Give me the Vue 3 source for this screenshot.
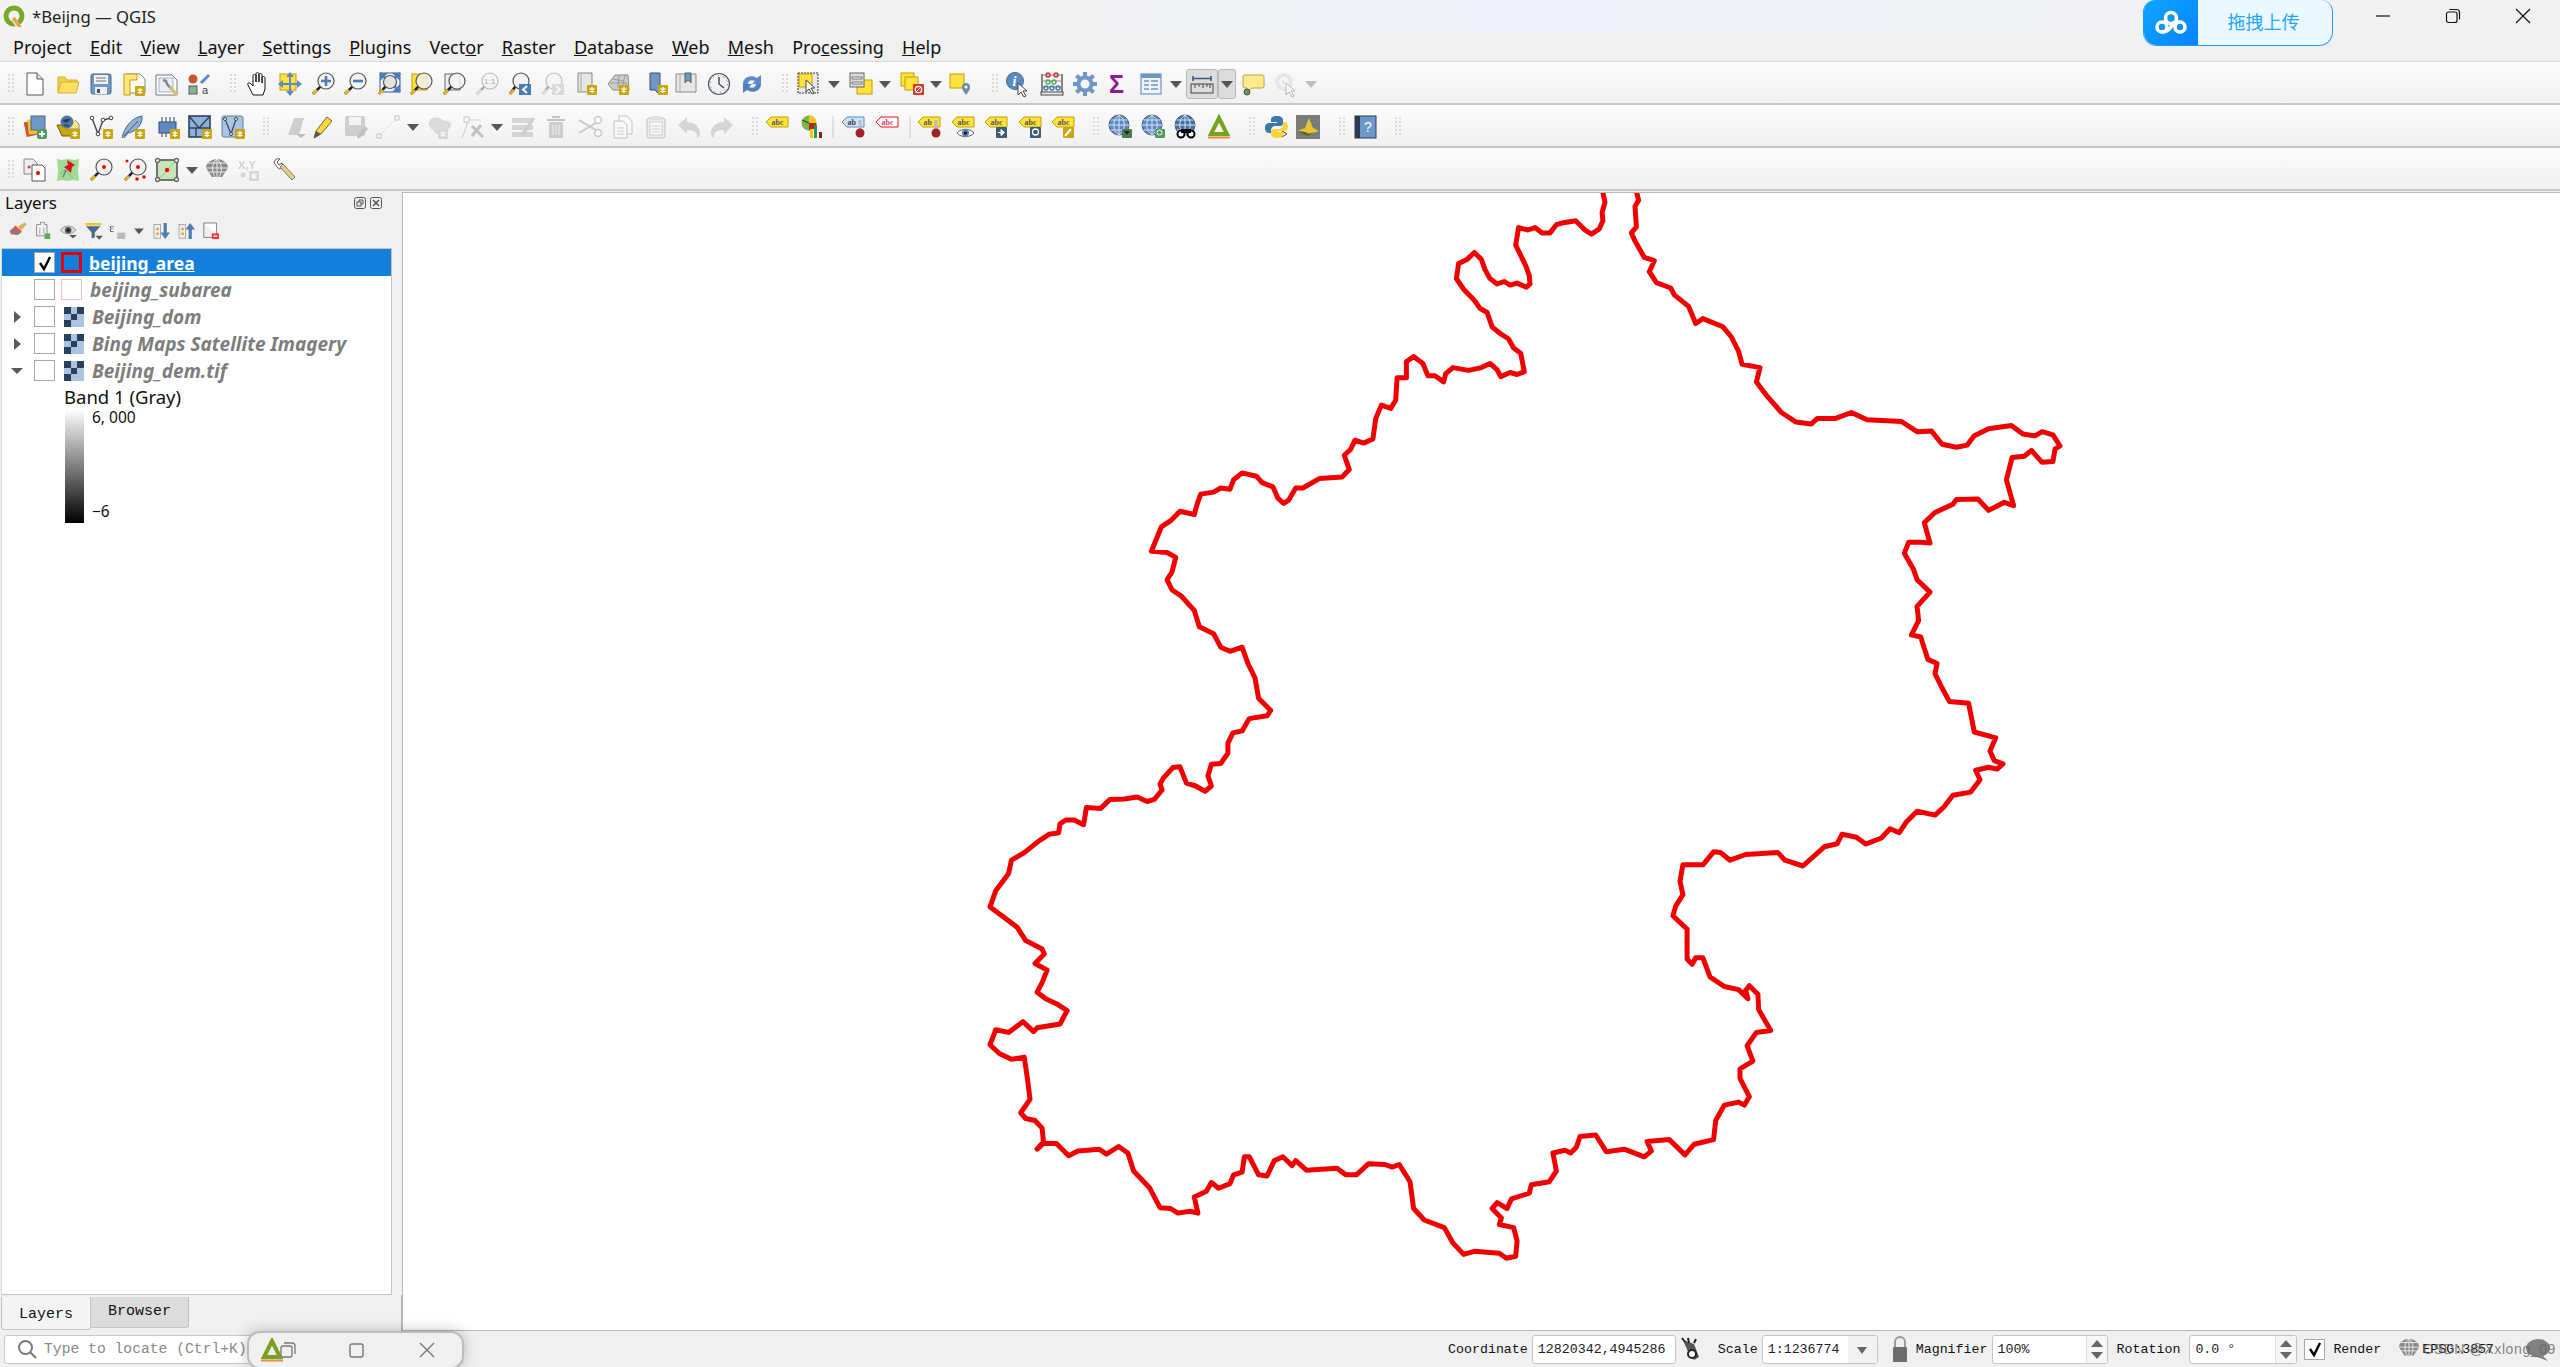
<script setup>
// small shared pieces for the toolbar icons
const star = (x = 13, y = 13) =>
  `<rect x="${x}" y="${y}" width="10" height="10" rx="1" fill="#c9a50e"/><path d="M${x + 5} ${y + 2}v6M${x + 2.5} ${y + 3.5}l5 3M${x + 7.5} ${y + 3.5}l-5 3" stroke="#fff" stroke-width="1.3"/>`
const mag = (cx = 15, cy = 9, r = 8, fill = '#f3f3f3') =>
  `<path d="M2 22L${cx - r * 0.7} ${cy + r * 0.7}" stroke="#222" stroke-width="2.6"/><path d="M2 22l4-4" stroke="#e3b422" stroke-width="3"/><circle cx="${cx}" cy="${cy}" r="${r}" fill="${fill}" stroke="#555" stroke-width="1.2"/>`
const cursor = (x = 10, y = 9) =>
  `<path d="M${x} ${y}v12l3-3 3 5 2-1-3-5h4z" fill="#fff" stroke="#444"/>`
const sheet = (d = 'M3 1h14v19H3z') =>
  `<path d="${d}" fill="#e6e6e6" stroke="#8a8a8a"/><path d="M6 1v19" stroke="#aaa"/>`
const tag = (fill = '#ffe23d', line = '#c4a000', t = 'abc', col = '#555') =>
  `<path d="M1 7l5-5h17v10H6z" fill="${fill}" stroke="${line}"/><text x="6.5" y="10" font-size="8" font-weight="700" font-family="Liberation Serif" fill="${col}">${t}</text>`
const pin = `<path d="M19 5v10" stroke="#bbb" stroke-width="3"/><circle cx="19" cy="18" r="4.5" fill="#a3222a"/>`
const globe = (c = '#5d8ac4') =>
  `<circle cx="11" cy="10" r="10" fill="${c}" stroke="#50627a"/><path d="M1 10h20M3 5h16M3 15h16M11 0v20M11 0c-7 5-7 15 0 20M11 0c7 5 7 15 0 20" stroke="#d8e4f2" fill="none"/>`
const tri = `<path d="M12 3L4 19h16z" fill="none" stroke="#77a31f" stroke-width="4"/><path d="M1 22.5h22" stroke="#ee8a3a" stroke-width="2"/>`

const icons = {
  new: `<path d="M4 1h10l6 6v16H4z" fill="#fff" stroke="#555"/><path d="M14 1v6h6" fill="#ddd" stroke="#555"/>`,
  open: `<path d="M2 20V5h7l2 3h10v3" fill="#f3cf4d" stroke="#d6b02e"/><path d="M2 21l3-11h18l-3 11z" fill="#ffdf63" stroke="#d6b02e"/>`,
  save: `<rect x="2" y="2" width="20" height="20" rx="2" fill="#6d97c4" stroke="#4a6a8c"/><rect x="5" y="3" width="14" height="9" fill="#f2f2f2"/><path d="M7 6h10M7 9h10" stroke="#777"/><rect x="6" y="15" width="12" height="7" fill="#eee"/><rect x="8" y="17" width="3" height="4" fill="#456"/>`,
  layoutNew: `<path d="M4 2h14l5 5v14H4z" fill="#fff" stroke="#888"/><path d="M2 2h13v6H8v15H2z" fill="#ffe680" stroke="#c5a100"/>${star(13, 14)}`,
  layoutMgr: `<path d="M1 3h16l5 5v15H1z" fill="#fff" stroke="#777"/><rect x="4" y="6" width="14" height="14" fill="#e9eef6" stroke="#9db3cf"/><path d="M8 8l3 1 1 3 9 10" stroke="#888" stroke-width="2.5" fill="none"/><path d="M15 15l7 8" stroke="#d9c06a" stroke-width="3"/>`,
  style: `<circle cx="6" cy="7" r="4.5" fill="#c8572e"/><path d="M14 11l8-8" stroke="#5d8ac4" stroke-width="3"/><rect x="2" y="14" width="8" height="8" fill="#8ab584" stroke="#557"/><text x="15" y="22" font-size="11" font-family="Liberation Sans" fill="#444">a</text>`,
  pan: `<path d="M7 23L2 13c-1-2 1-3 3-1l2 2V4c0-2 3-2 3 0v6V2c0-2 3-2 3 0v8V3c0-2 3-2 3 0v8V6c0-2 3-2 3 0v11l-2 6z" fill="#fff" stroke="#111"/>`,
  panTo: `<rect x="2" y="2" width="16" height="16" fill="#ffe23d" stroke="#c4a000"/><path d="M12 0l4 5h-8zM12 24l4-5H8zM0 12l5-4v8zM24 12l-5-4v8z" fill="#5d8ac4"/><path d="M12 4v16M4 12h16" stroke="#5d8ac4" stroke-width="2"/>`,
  zoomIn: `${mag()}<path d="M15 4v10M10 9h10" stroke="#4c7bb5" stroke-width="2.6"/>`,
  zoomOut: `${mag()}<path d="M10 9h10" stroke="#4c7bb5" stroke-width="2.6"/>`,
  zoomFull: `<rect x="3" y="1" width="20" height="19" fill="#f2f2f2" stroke="#4c7bb5" stroke-width="1.2"/><path d="M3 1l6 6M23 1l-6 6M23 20l-6-6" stroke="#5d8ac4" stroke-width="2.6"/>${mag(13, 10, 6.5, '#e4e4e4')}<path d="M3 1h8l-8 8zM23 1h-8l8 8zM23 20h-8l8-8z" fill="#4c7bb5"/>`,
  zoomSel: `<rect x="3" y="2" width="15" height="16" fill="#ffe23d" stroke="#c4a000"/>${mag(15, 9, 8, 'rgba(240,240,240,.85)')}`,
  zoomLayer: `<rect x="3" y="2" width="15" height="16" fill="#eee" stroke="#666"/>${mag(15, 9, 8, 'rgba(245,245,245,.8)')}`,
  zoomNative: `${mag()}<text x="9" y="12" font-size="8" font-weight="700" font-family="Liberation Sans" fill="#555">1:1</text>`,
  zoomLast: `${mag(13, 9, 8)}<rect x="11" y="12" width="12" height="11" fill="#4c7bb5"/><path d="M19 14l-4 3.5 4 3.5" stroke="#fff" stroke-width="2" fill="none"/>`,
  zoomNext: `${mag(13, 9, 8)}<rect x="11" y="12" width="12" height="11" fill="#aaa"/><path d="M15 14l4 3.5-4 3.5" stroke="#fff" stroke-width="2" fill="none"/>`,
  mapDoc: `${sheet()}${star(12, 13)}`,
  map3d: `<path d="M1 12L8 3h13l1 15H6z" fill="#ccc" stroke="#8a8a8a"/><path d="M6 7l10 2 5 5M12 3l-1 13M18 3l-3 14M3 11h17" stroke="#999" fill="none"/>${star(12, 13)}`,
  bookmark: `<path d="M5 1h10v22l-5-5H5z" fill="#6d97c4" stroke="#3c4f66"/>${star(13, 13)}`,
  bookmarks: `${sheet('M2 2h20v18H2z')}<path d="M11 1h6v10l-3-3-3 3z" fill="#6d97c4" stroke="#466"/>`,
  clock: `<circle cx="12" cy="12" r="10.5" fill="#eef2f6" stroke="#555" stroke-width="1.2"/><circle cx="12" cy="12" r="8.5" fill="none" stroke="#6d97c4" stroke-dasharray="1.5 4"/><path d="M12 5v7l5 4" stroke="#444" stroke-width="1.4" fill="none"/>`,
  refresh: `<path d="M3 12c0-7 8-10 14-6l4-3v9h-9l3-3c-4-2-7 0-7 3z" fill="#5d8ac4"/><path d="M21 12c0 7-8 10-14 6l-4 3v-9h9l-3 3c4 2 7 0 7-3z" fill="#4d82bd"/>`,
  select: `<rect x="1" y="1" width="20" height="20" fill="#e8e8e8" stroke="#333" stroke-dasharray="2 1"/><rect x="2" y="2" width="13" height="13" fill="#ffe23d" stroke="#c4a000"/>${cursor(9, 8)}`,
  selAttr: `<rect x="8" y="8" width="15" height="14" fill="#ffe23d" stroke="#c4a000"/><rect x="1" y="1" width="14" height="14" fill="#ddd" stroke="#666"/><path d="M3 5h10v2H3zM3 10h10v2H3z" fill="#fff" stroke="#777"/>`,
  deselect: `<rect x="1" y="1" width="13" height="13" fill="#ffe23d" stroke="#c4a000"/><rect x="5" y="5" width="13" height="13" fill="#ffe23d" stroke="#c4a000"/><rect x="13" y="12" width="11" height="11" rx="1" fill="#d9342b"/><circle cx="18.5" cy="17.5" r="3.2" fill="none" stroke="#fff" stroke-width="1.3"/><path d="M16 20l5-5" stroke="#fff"/>`,
  selLoc: `<rect x="2" y="2" width="14" height="14" fill="#ffe23d" stroke="#c4a000"/><path d="M18 23c-3-4-4-6-4-8a4 4 0 018 0c0 2-1 4-4 8z" fill="#6d8aa6"/><circle cx="18" cy="15" r="1.5" fill="#fff"/>`,
  identify: `<circle cx="9" cy="9" r="8.5" fill="#5d8ac4" stroke="#4a6a8c"/><text x="6.5" y="14" font-size="14" font-weight="700" font-style="italic" font-family="Liberation Serif" fill="#fff">i</text>${cursor(12, 11)}`,
  abacus: `<path d="M2 2v18M22 2v18" stroke="#555" stroke-width="1.4"/><path d="M2 3h20M2 9h20M2 15h20" stroke="#888"/><rect x="1" y="20" width="22" height="3" fill="#eee" stroke="#444"/><g fill="none" stroke-width="1.4"><circle cx="8" cy="3" r="2" stroke="#c33"/><circle cx="16" cy="3" r="2" stroke="#c33"/><circle cx="8" cy="10" r="2" stroke="#5a5"/><circle cx="14" cy="10" r="2" stroke="#5a5"/><circle cx="6" cy="16" r="2" stroke="#47a"/><circle cx="12" cy="16" r="2" stroke="#47a"/><circle cx="18" cy="16" r="2" stroke="#47a"/></g>`,
  gear: `<circle cx="12" cy="12" r="6.5" fill="none" stroke="#6d97c4" stroke-width="4"/><path d="M12 0v5M12 19v5M0 12h5M19 12h5M3.5 3.5l4 4M16.5 16.5l4 4M20.500 3.500l-4 4M7.500 16.500l-4 4" stroke="#6d97c4" stroke-width="4"/>`,
  sigma: `<text x="3" y="21" font-size="25" font-weight="700" font-family="Liberation Sans" fill="#8b1a93">Σ</text>`,
  attrTable: `<rect x="2" y="2" width="20" height="20" fill="#eef3fa" stroke="#6d97c4" stroke-width="1.2"/><rect x="2" y="2" width="20" height="4" fill="#6d97c4"/><path d="M5 9h5M12 9h7M5 13h5M12 13h7M5 17h5M12 17h7" stroke="#6d97c4" stroke-width="1.6"/>`,
  measure: `<path d="M3 4v5M21 4v5M3 6.500h18" stroke="#3c5878" stroke-width="1.6"/><rect x="1" y="12" width="22" height="9" fill="#ddd" stroke="#444"/><path d="M5 12v4M9 12v3M13 12v4M17 12v3M20 12v4" stroke="#444"/>`,
  tip: `<path d="M4 3h17q2 0 2 2v9q0 2-2 2H11l-5 3v-3H4q-2 0-2-2V5q0-2 2-2z" fill="#ffe98a" stroke="#b9a44a"/><circle cx="6" cy="20" r="3" fill="#6a9a5a" stroke="#444"/>`,
  action: `<circle cx="11" cy="10" r="7" fill="none" stroke="#ccc" stroke-width="4"/><path d="M9 7l5 3-5 3z" fill="#ccc"/>${cursor(13, 11)}`,
  dsm: `<rect x="2" y="6" width="13" height="15" fill="#c8572e" transform="rotate(-12 8 13)"/><rect x="5" y="4" width="13" height="15" fill="#f4c430" transform="rotate(-6 11 11)"/><rect x="8" y="1" width="14" height="14" fill="#6d97c4" stroke="#4a6a8c"/><rect x="14" y="14" width="10" height="10" rx="2" fill="#4f9a5a"/><path d="M19 16v6M16 19h6" stroke="#fff" stroke-width="1.8"/>`,
  gpkg: `<path d="M1 10l5 11h13V10z" fill="#c9a50e" stroke="#6b5a00"/><path d="M12 14h11V9l-4-4" fill="#ffe680" stroke="#888"/><circle cx="11" cy="7" r="6.500" fill="#4f78a8"/><path d="M7 5l3 2 4-3M8 10l5 1" stroke="#2e4a6b" stroke-width="2"/>${star(14, 14)}`,
  vec: `<path d="M3 3l6 16 5-14 8-2" fill="none" stroke="#444" stroke-width="1.4"/><g fill="#fff" stroke="#444"><circle cx="3" cy="3" r="1.8"/><circle cx="9" cy="19" r="1.8"/><circle cx="14" cy="5" r="1.8"/><circle cx="22" cy="3" r="1.8"/></g>${star(14, 14)}`,
  feather: `<path d="M1 23C3 13 10 3 21 1c1 8-6 16-14 17l-4 5" fill="#8fb0d6" stroke="#4a6a8c"/><path d="M3 21L17 6" stroke="#456"/>${star(14, 14)}`,
  chip: `<rect x="3" y="7" width="17" height="11" fill="#5d8ac4" stroke="#2f4e70"/><path d="M6 2v5M10 2v5M14 2v5M18 2v5M6 18v4M10 18v4" stroke="#345"/>${star(14, 14)}`,
  mesh: `<rect x="1" y="1" width="21" height="21" fill="#8fb0d6" stroke="#2b4361" stroke-width="1.6"/><path d="M1 13h21M8 13v9M1 1l10 12 11-12M11 13L22 1" stroke="#2b4361" stroke-width="1.4" fill="none"/>${star(14, 14)}`,
  vecBox: `<rect x="1" y="1" width="21" height="21" rx="2" fill="#a9c3e2" stroke="#5d7ea6"/><path d="M4 4l6 15 5-15" fill="none" stroke="#345" stroke-width="1.2"/><g fill="#fff" stroke="#345"><circle cx="4" cy="4" r="1.500"/><circle cx="10" cy="19" r="1.500"/><circle cx="15" cy="4" r="1.500"/></g>${star(14, 14)}`,
  multi: `<path d="M4 20L10 3h5l-5 17zM9 20l6-17h5l-5 17z" fill="#888"/><path d="M12 19h10l-5 4z" fill="#555"/>`,
  pencil: `<path d="M3 23l2-7L16 2l5 4-11 13z" fill="#f6d743" stroke="#7a6a1a"/><path d="M3 23l2-7 5 3z" fill="#555"/>`,
  saveEdit: `<rect x="1" y="1" width="20" height="20" rx="2" fill="#888"/><rect x="5" y="2" width="12" height="8" fill="#eee"/><path d="M13 20l8-9 3 3-8 9h-3z" fill="#666"/>`,
  dig: `<path d="M3 21L21 3" stroke="#777" stroke-dasharray="2 2"/><rect x="1" y="19" width="4" height="4" fill="#fff" stroke="#666"/><rect x="19" y="1" width="4" height="4" fill="#fff" stroke="#666"/>`,
  poly: `<path d="M1 6c2-5 11-4 14-1 3 1 8 0 8 5 0 5-5 4-7 6l-1 3H8c-2-4-9-6-7-13z" fill="#aaa"/>${star(10, 14)}`,
  vertex: `<path d="M6 4v6L1 23" stroke="#777" fill="none"/><rect x="3" y="2" width="5" height="5" fill="#fff" stroke="#666"/><path d="M8 5h12" stroke="#888"/><path d="M11 11l11 11M20 10L11 21" stroke="#666" stroke-width="3"/>`,
  editTable: `<rect x="1" y="3" width="21" height="5" fill="#9a9a7a"/><rect x="1" y="10" width="21" height="5" fill="#9a9a7a"/><rect x="1" y="17" width="21" height="5" fill="#9a9a7a"/><path d="M10 19l11-17 3 2-11 17z" fill="#888"/>`,
  trash: `<path d="M3 5h18M8 2h8" stroke="#855" stroke-width="2"/><path d="M5 7h14v16H5z" fill="#a78"/><path d="M9 10v10M12 10v10M15 10v10" stroke="#eee"/>`,
  scissors: `<path d="M1 5l22 13M1 18L23 5" stroke="#777" stroke-width="2"/><circle cx="20" cy="5" r="3.500" fill="#fff" stroke="#777" stroke-width="1.500"/><circle cx="20" cy="18" r="3.500" fill="#fff" stroke="#777" stroke-width="1.500"/>`,
  copy: `<path d="M8 1h8l5 5v13H8z" fill="#fff" stroke="#666"/><path d="M3 6h9l4 4v13H3z" fill="#fff" stroke="#666"/><path d="M6 13h7M6 16h7M6 19h7" stroke="#888"/>`,
  paste: `<rect x="3" y="3" width="18" height="20" rx="2" fill="#ddd" stroke="#666"/><rect x="8" y="1" width="8" height="4" fill="#bbb"/><rect x="6" y="7" width="12" height="13" fill="#fff" stroke="#888"/><path d="M8 11h8M8 14h8M8 17h8" stroke="#888"/>`,
  undo: `<path d="M1 10l9-8v5c8 0 13 5 13 11 0 2-1 4-3 5 1-6-3-8-10-8v4z" fill="#999"/>`,
  redo: `<path d="M23 10l-9-8v5C6 7 1 12 1 18c0 2 1 4 3 5-1-6 3-8 10-8v4z" fill="#999"/>`,
  label: tag(),
  diagram: `<circle cx="9" cy="8" r="7.500" fill="#7ab648"/><path d="M9 8V.500A7.500 7.500 0 0116.500 8z" fill="#f5c518"/><path d="M9 8h7.500A7.500 7.500 0 019 15.500z" fill="#b3251e"/><path d="M2 5l7 3" stroke="#333"/><rect x="10" y="14" width="3" height="9" fill="#f5c518"/><rect x="14" y="10" width="3" height="13" fill="#1f9a4a"/><rect x="19" y="17" width="3" height="6" fill="#8b1a1a"/>`,
  abBlue: `${tag('#cfe2f7', '#5d8ac4', 'ab', '#345')}${pin}`,
  abcRed: tag('#fff', '#e3141c', 'abc', '#e36'),
  abPin: `${tag('#ffe23d', '#c4a000', 'ab')}${pin}`,
  abcEye: `${tag()}<path d="M6 18c5-5 12-5 17 0-5 5-12 5-17 0z" fill="#fff" stroke="#666"/><circle cx="14.500" cy="18" r="3.500" fill="#4c7bb5"/><circle cx="14.500" cy="18" r="1.500" fill="#111"/>`,
  abcMove: `${tag()}<rect x="12" y="12" width="11" height="11" rx="1" fill="#3d5c78"/><path d="M14 17.500h4M17 14.500l3.500 3-3.500 3z" fill="#fff" stroke="#fff"/>`,
  abcRot: `${tag()}<rect x="12" y="12" width="11" height="11" rx="1" fill="#3d5c78"/><circle cx="17.500" cy="17" r="3" fill="none" stroke="#fff" stroke-width="1.300"/>`,
  abcEdit: `${tag()}<rect x="12" y="12" width="11" height="11" rx="1" fill="#c9a50e"/><path d="M14 21l6-7" stroke="#fff" stroke-width="2"/>`,
  globeA: `${globe()}<rect x="14" y="14" width="10" height="9" rx="1" fill="#4f7a4f"/><path d="M16 16h6l-3 4z" fill="#222"/>`,
  globeB: `${globe()}<rect x="14" y="14" width="10" height="9" rx="1" fill="#4f9a5a"/><circle cx="18.500" cy="17.500" r="2.500" fill="none" stroke="#fff"/>`,
  globeC: `${globe('#47709f')}<circle cx="7" cy="19" r="3.500" fill="#fff" stroke="#000" stroke-width="2"/><circle cx="17" cy="19" r="3.500" fill="#fff" stroke="#000" stroke-width="2"/><path d="M7 14h10v4H7z"/>`,
  tri,
  python: `<path d="M12 1c-5 0-6 2-6 4v2h6v1H4c-3 0-4 3-4 5s1 5 4 5h2v-3c0-2 2-4 4-4h5c2 0 3-1 3-3V5c0-2-2-4-6-4z" fill="#3c78a8"/><path d="M13 23c5 0 6-2 6-4v-2h-6v-1h6c2 0 4-1 4-4s-1-5-4-5h-1v3c0 2-2 4-4 4H9c-2 0-3 1-3 3v2c0 2 2 4 7 4z" fill="#fdd43c"/><path d="M17 16l5 3-5 3" stroke="#555" fill="none"/>`,
  grass: `<rect width="24" height="24" fill="#7a7a78"/><path d="M1 16l8-3 4-10 4 10 6 3-9 3-5-2z" fill="#e8c430"/><path d="M1 16l8 1 3 2 6-2-6 4z" fill="#4e6a22"/>`,
  help: `<rect x="1" y="1" width="21" height="22" fill="#6d97c4" stroke="#2b3a4d"/><rect x="1" y="1" width="5" height="22" fill="#2b3a4d"/><text x="10" y="17" font-size="14" font-family="Liberation Sans" fill="#fff">?</text>`,
  identDoc: `<path d="M1 1h9l4 4v11H1z" fill="#eee" stroke="#888"/><path d="M9 7h10l3 3v13H9z" fill="#fff" stroke="#555"/><circle cx="6" cy="9" r="1.500" fill="#e33"/><circle cx="15" cy="15" r="2" fill="#e00"/>`,
  mapPin: `<path d="M1 1l5 1 6-1 6 1 5-1-1 11 1 11-6-1-6 1-5-1-5 1 1-11z" fill="#9fdc93"/><path d="M4 16l5-4 8 8M14 2l3 7" stroke="#6fc0a8" fill="none"/><path d="M11 2l8 5-3 2-1 6-7-6 4-2z" fill="#e0121f"/><path d="M10 12l-3 7" stroke="#777" stroke-width="1.500"/>`,
  magDot: `${mag()}<circle cx="15" cy="9" r="2" fill="#f00"/>`,
  magDots: `${mag()}<circle cx="15" cy="9" r="2" fill="#f00"/><circle cx="4" cy="3" r="1.500" fill="#e00"/><circle cx="14" cy="21" r="1.800" fill="#e00"/><circle cx="21" cy="19" r="1.800" fill="#e00"/>`,
  boxPick: `<rect x="2" y="2" width="20" height="20" fill="#c7e6b8" stroke="#555" stroke-width="1.600"/><path d="M4 20l7-6 8-10" stroke="#8ccf7a" fill="none"/><g fill="#fff" stroke="#666" stroke-width="1.300"><circle cx="2.500" cy="2.500" r="2"/><circle cx="21.500" cy="2.500" r="2"/><circle cx="2.500" cy="21.500" r="2"/><circle cx="21.500" cy="21.500" r="2"/></g><circle cx="12" cy="12" r="2.200" fill="#f00"/>`,
  globeGray: `<path d="M12 1a11 9 0 0111 9l-6 9H7l-6-9A11 9 0 0112 1z" fill="#888"/><path d="M1 10h22M3 5h18M4 14h16M12 1v18M12 1c-6 4-5 14-2 18M12 1c6 4 5 14 2 18" stroke="#eee" fill="none"/>`,
  xy: `<text x="0" y="11" font-size="11" font-weight="700" font-family="Liberation Sans" fill="#888">X,Y</text><circle cx="5" cy="17" r="2.500" fill="#999"/>${star(11, 13)}`,
  wrench: `<path d="M2 5c0-3 3-5 6-4l-3 3 2 3 3-2c1 3-1 6-3 6z" fill="#fff" stroke="#555"/><path d="M8 9l3-3 12 13-3 3z" fill="#e3cf7e" stroke="#777"/>`,
  brush: `<path d="M12 6l9-5 2 3-8 8z" fill="#d9b45a"/><path d="M2 12l7-7 8 8-5 4-9-1z" fill="#e5563a"/><path d="M2 12l12 2" stroke="#5d8ac4" stroke-width="3"/>`,
  addGroup: `<path d="M9 1h5v3h3v14H4V4h5z" fill="#f2f2f2" stroke="#777"/><path d="M8 8v8M13 8v8" stroke="#999"/><rect x="14" y="15" width="7" height="7" fill="#5aa85a"/>`,
  eye: `<path d="M1 11c6-7 14-7 20 0-6 6-14 6-20 0z" fill="#d8d8d8" stroke="#888"/><circle cx="11" cy="11" r="4" fill="#555"/><circle cx="11" cy="11" r="2" fill="#222"/><path d="M12 17h10l-5 4z" fill="#555"/>`,
  filter: `<path d="M1 2h20v3H1z" fill="#f0c419"/><path d="M2 6h18l-7 8v6l-4 1v-7z" fill="#456a8c"/><path d="M14 18h9l-4.500 5z" fill="#555"/>`,
  eps: `<text x="1" y="13" font-size="15" font-family="Liberation Serif" fill="#6b3b7a">ε</text><rect x="11" y="14" width="10" height="8" fill="#bbb"/>`,
  expand: `<rect x="2" y="4" width="8" height="17" fill="#eee" stroke="#999"/><rect x="5" y="8" width="3" height="3" fill="#e8a020"/><rect x="5" y="14" width="3" height="3" fill="#e8a020"/><path d="M16 2v13" stroke="#4c7bb5" stroke-width="4"/><path d="M10 14h12l-6 8z" fill="#4c7bb5"/>`,
  collapse: `<rect x="2" y="4" width="8" height="17" fill="#eee" stroke="#999"/><rect x="5" y="8" width="3" height="3" fill="#e8a020"/><rect x="5" y="14" width="3" height="3" fill="#e8a020"/><path d="M16 8v14" stroke="#4c7bb5" stroke-width="4"/><path d="M10 10h12l-6-8z" fill="#4c7bb5"/>`,
  removeLayer: `<path d="M3 2h16v15" fill="#fff" stroke="#666"/><path d="M3 2v18h10" fill="none" stroke="#666"/><rect x="13" y="15" width="9" height="7" fill="#e33"/><path d="M15 18.500h5" stroke="#fff" stroke-width="1.600"/>`,
  dd: `<path d="M6 9h12l-6 7z" fill="#555"/>`,
  grip: `<g fill="#bbb"><circle cx="10" cy="3" r=".8"/><circle cx="14" cy="3" r=".8"/><circle cx="10" cy="7" r=".8"/><circle cx="14" cy="7" r=".8"/><circle cx="10" cy="11" r=".8"/><circle cx="14" cy="11" r=".8"/><circle cx="10" cy="15" r=".8"/><circle cx="14" cy="15" r=".8"/><circle cx="10" cy="19" r=".8"/><circle cx="14" cy="19" r=".8"/></g>`,
  sep: `<path d="M12 1v22" stroke="#ccc"/>`,
}

// "name:centerX", ! means greyed out, + means pressed
function parseRow(str) {
  let right = 0
  return str.trim().split(/\s+/).map((entry) => {
    const [raw, c] = entry.split(':')
    const name = raw.replace(/[!+]/g, '')
    const on = raw.includes('+')
    const w = on ? (name === 'dd' ? 18 : 32) : 24
    const ml = Number(c) - w / 2 - right
    right = Number(c) + w / 2
    return { name, off: raw.includes('!'), on, w, ml }
  })
}

const rows = [
  parseRow(`grip:11 new:35 open:68 save:101 layoutNew:134 layoutMgr:167 style:199 grip:233 pan:258 panTo:290 zoomIn:323 zoomOut:355
    zoomFull:389 zoomSel:421 zoomLayer:454 zoomNative!:487 zoomLast:520 zoomNext!:553 mapDoc:587 map3d:619 bookmark:657 bookmarks:686
    clock:719 refresh:752 grip:785 select:809 dd:834 selAttr:861 dd:885 deselect:912 dd:936 selLoc:960 grip:995 identify:1018
    abacus:1052 gear:1085 sigma:1118 attrTable:1151 dd:1176 measure+:1202 dd+:1227 tip:1253 action!:1285 dd!:1311`),
  parseRow(`grip:11 dsm:35 gpkg:68 vec:101 feather:133 chip:168 mesh:200 vecBox:233 grip:266 multi!:296 pencil:323 saveEdit!:356 dig!:388
    dd:413 poly!:440 vertex!:473 dd:497 editTable!:523 trash!:556 scissors!:590 copy!:623 paste!:656 undo!:689 redo!:722 grip:755
    label:777 diagram:812 sep:833 abBlue:853 abcRed:887 sep:910 abPin:929 abcEye:963 abcMove:996 abcRot:1030 abcEdit:1063 grip:1096
    globeA:1120 globeB:1153 globeC:1186 tri:1219 grip:1252 python:1277 grass:1308 grip:1342 help:1366 grip:1398`),
  parseRow(`grip:11 identDoc:35 mapPin:68 magDot:101 magDots:135 boxPick:167 dd:192 globeGray:217 xy!:250 wrench:284`),
]
const layerTools = parseRow(`brush:18 addGroup:43 eye:69 filter:94 eps:118 dd:139 expand:162 collapse:187 removeLayer:211`)

const menus = [
  ['Pro', 'j', 'ect'], ['', 'E', 'dit'], ['', 'V', 'iew'], ['', 'L', 'ayer'], ['', 'S', 'ettings'], ['', 'P', 'lugins'],
  ['Vect', 'o', 'r'], ['', 'R', 'aster'], ['', 'D', 'atabase'], ['', 'W', 'eb'], ['', 'M', 'esh'], ['Pro', 'c', 'essing'], ['', 'H', 'elp'],
]

const layers = [
  { name: 'beijing_area', sym: 'line', on: true, cls: 'sel' },
  { name: 'beijing_subarea', sym: 'faint', cls: 'dim' },
  { name: 'Beijing_dom', sym: 'raster', caret: 'r', cls: 'dim' },
  { name: 'Bing Maps Satellite Imagery', sym: 'raster', caret: 'r', cls: 'dim' },
  { name: 'Beijing_dem.tif', sym: 'raster', caret: 'd', cls: 'dim' },
]

// outline traced from the map, [x, y] in page pixels
const upper = (x, y) => [960 + x / 1.4, 190 + y / 2.45]
const lower = (x, y) => [960 + x / 1.4, 690 + y / 2.613]
const pairs = (nums, fn) => {
  const out = []
  for (let i = 0; i < nums.length; i += 2) out.push(fn(nums[i], nums[i + 1]))
  return out
}
const partA = [899,2,903,35,899,60,900,80,895,100,884,113,875,103,862,80,845,85,835,90,826,110,815,110,805,97,795,103,782,97,778,140,785,165,792,190,797,215,798,235,793,243,780,233,770,238,762,229,752,235,742,222,735,200,730,175,720,158,710,175,698,185,695,222,705,248,720,275,728,295,738,305,745,340,755,355,768,370,775,392,785,405,790,450,780,457,770,452,757,462,752,445,742,430,730,440,712,447,690,440,680,455,677,475,665,460,655,460,648,430,635,413,625,425,625,465,612,465,610,520,603,540,590,532,582,565,578,615,565,625,553,618,547,640,538,655,545,690,535,708,503,712,480,735,470,735,460,765,453,773,445,760,438,732,423,722,415,706,395,698,383,715,378,738,365,735,355,745,337,750,332,775,328,800,308,792,295,815,282,830,275,860,268,890,290,893,302,905,297,940,290,960,297,985,310,1000,328,1035,335,1075,355,1092,365,1125,378,1135,395,1125,403,1165,413,1200,418,1250,435,1280,430,1293,405,1300,395,1330,382,1335,375,1360,375,1385,365,1410,352,1412,347,1440,352,1465,343,1478,330,1465,317,1458,308,1418,298,1420,285,1445,280,1460,283,1475,272,1498,262,1503,248,1492,230,1497,210,1498,197,1520,177,1518,173,1560]
const partB = [160,345,148,345,140,355,138,378,125,382,110,400,90,430,72,450,68,485,50,530,42,572,60,597,80,625,92,660,115,682,118,695,105,720,122,737,115,770,108,795,120,812,135,825,150,843,140,878,108,888,103,898,88,872,68,900,50,893,42,932,55,955,72,970,90,965,95,1030,98,1075,85,1110,92,1125,105,1130,115,1150,117,1190,108,1205,115,1190,135,1190,152,1222,165,1210,195,1205,205,1218,222,1198,235,1215,243,1262,265,1305,280,1358,295,1360,305,1372,322,1367,333,1372,328,1330,345,1315,352,1292,362,1307,378,1295,383,1272,395,1265,398,1225,405,1225,418,1272,430,1275,440,1235,452,1225,465,1248,470,1235,485,1260,528,1255,540,1272,555,1272,572,1243,595,1245,605,1252,615,1245,630,1290,635,1360,650,1390,678,1410,690,1450,705,1480,720,1472,755,1477,765,1490,778,1485,780,1445,775,1410,755,1402,758,1385,745,1360,752,1345,766,1360,772,1335,797,1320,800,1298,825,1290,835,1262,830,1215,847,1208,855,1215,863,1200,868,1172,890,1168,905,1212,930,1205,958,1225,968,1210,962,1185,993,1180,1015,1220,1028,1192,1055,1180,1058,1130,1070,1090,1090,1082,1098,1090,1105,1068,1092,1020,1092,995,1110,975,1102,935,1115,900,1135,895,1118,840,1117,800,1105,778,1100,790,1103,812,1090,788,1070,780,1050,755,1040,705,1030,705,1025,722,1018,708,1018,630,998,595,1002,570,1012,540,1008,505,1012,462,1040,462,1055,428,1065,430,1078,450,1100,435,1145,430,1155,450,1180,465,1210,415,1228,407,1235,382,1255,390,1268,408,1290,392,1302,368,1315,378,1325,350,1340,322,1365,332,1378,310,1390,280,1415,272,1428,240,1422,215,1440,207,1452,212,1460,198,1448,190,1442,165,1450,130,1420,115,1412,40,1385,35,1375,0]
const partC = [1365,1190,1368,1165,1355,1155,1345,1100,1332,1095,1342,1060,1340,1025,1358,990,1340,960,1335,935,1322,895,1328,868,1345,868,1358,870,1350,820,1365,795,1390,775,1395,763,1425,762,1440,790,1462,770,1475,778,1465,715,1473,660,1490,657,1500,643,1515,672,1530,670,1533,640,1540,632,1530,605,1515,597,1505,607,1488,603,1472,582,1440,590,1420,607,1410,630,1395,635,1375,628,1360,595,1340,597,1318,572,1270,568,1248,550,1225,565,1200,565,1192,578,1170,573,1150,550,1130,510,1115,475,1120,440,1095,432,1090,400,1080,365,1068,340,1040,320,1030,332,1020,290,1000,262,995,245,975,232,965,205,972,178,958,170,945,130,940,110,947,95,945,45,950,30,946,2]
const outline = [...pairs(partA, upper), ...pairs(partB, lower), ...pairs(partC, upper)]
  .map((p) => p.map((v) => v.toFixed(1)).join(','))
  .join(' ')
</script>

<template>
  <div class="app">
    <header class="titlebar">
      <svg class="qgis" width="24" height="24" viewBox="0 0 24 24">
        <circle cx="12" cy="11" r="8" fill="none" stroke="#7aa82b" stroke-width="5" />
        <path d="M12 11l8 11h-6l-6-9z" fill="#f0f0f0" />
        <path d="M13 12l7 10h-4l-6-8z" fill="#e8a23c" />
      </svg>
      <span class="win-title">*Beijng — QGIS</span>
      <div class="upload">
        <div class="upload-logo">
          <svg width="32" height="26" viewBox="0 0 32 26" fill="none" stroke="#fff" stroke-width="3.600">
            <circle cx="16" cy="8" r="5.500" />
            <circle cx="7" cy="17" r="5" />
            <circle cx="25" cy="17" r="5" />
            <path d="M7 22c6 0 8-4 9-5s3-5 9-5" />
          </svg>
        </div>
        <span class="upload-text">拖拽上传</span>
      </div>
      <div class="win-btns">
        <svg width="16" height="16" viewBox="0 0 16 16"><path d="M1 8h14" stroke="#111" stroke-width="1.200" /></svg>
        <svg width="16" height="16" viewBox="0 0 16 16" fill="none" stroke="#111" stroke-width="1.200">
          <rect x="1.500" y="4" width="10.500" height="10.500" rx="2" />
          <path d="M4.500 1.500h7q3 0 3 3v7" />
        </svg>
        <svg width="16" height="16" viewBox="0 0 16 16"><path d="M1 1l14 14M15 1L1 15" stroke="#111" stroke-width="1.200" /></svg>
      </div>
    </header>

    <nav class="menubar">
      <span v-for="m in menus" :key="m[1] + m[2]" class="menu">{{ m[0] }}<u>{{ m[1] }}</u>{{ m[2] }}</span>
    </nav>

    <div v-for="(row, r) in rows" :key="r" class="toolbar">
      <span
        v-for="(t, i) in row"
        :key="i"
        class="tool"
        :class="{ off: t.off, on: t.on }"
        :style="{ width: t.w + 'px', marginLeft: t.ml + 'px' }"
      >
        <svg width="24" height="24" viewBox="0 0 24 24" v-html="icons[t.name]"></svg>
      </span>
    </div>

    <main class="main">
      <aside class="dock">
        <div class="dock-title">
          <span>Layers</span>
          <span class="dock-btns">
            <svg width="12" height="12" viewBox="0 0 12 12" fill="none" stroke="#555"><rect x=".5" y=".5" width="11" height="11" rx="2" /><rect x="3" y="5" width="4" height="4" /><path d="M5 5V3h4v4H7" /></svg>
            <svg width="12" height="12" viewBox="0 0 12 12" fill="none" stroke="#555"><rect x=".5" y=".5" width="11" height="11" rx="2" /><path d="M3 3l6 6M9 3L3 9" stroke-width="1.600" /></svg>
          </span>
        </div>
        <div class="dock-tools">
          <span
            v-for="(t, i) in layerTools"
            :key="i"
            class="dock-tool"
            :style="{ marginLeft: t.ml + 'px' }"
          >
            <svg width="24" height="24" viewBox="0 0 24 24" v-html="icons[t.name]"></svg>
          </span>
        </div>

        <div class="tree">
          <div v-for="l in layers" :key="l.name" class="layer" :class="l.cls">
            <span class="caret" :class="l.caret"></span>
            <span class="check">
              <svg v-if="l.on" width="18" height="18" viewBox="0 0 18 18"><path d="M4 9l4 6 6-12" fill="none" stroke="#000" stroke-width="2.400" /></svg>
            </span>
            <span v-if="l.sym === 'line'" class="sym sym-line"></span>
            <span v-else-if="l.sym === 'faint'" class="sym sym-faint"></span>
            <svg v-else class="sym-raster" width="20" height="20" viewBox="0 0 3 3" shape-rendering="crispEdges">
              <path d="M0 0h1v1H0zM2 0h1v1H2zM1 1h1v1H1zM0 2h1v1H0z" fill="#2c3f58" />
              <path d="M1 0h1v1H1zM0 1h1v1H0zM2 1h1v1H2zM1 2h2v1H1z" fill="#a9c3e2" />
            </svg>
            <span class="layer-name">{{ l.name }}</span>
          </div>
          <div class="band">Band 1 (Gray)</div>
          <div class="legend">
            <div class="ramp"></div>
            <div class="ramp-labels">
              <span>6, 000</span>
              <span>−6</span>
            </div>
          </div>
        </div>

        <div class="tabs">
          <span class="tab active">Layers</span>
          <span class="tab">Browser</span>
        </div>
      </aside>

      <div class="canvas">
        <svg class="map" width="2158" height="1138" viewBox="402 193 2158 1138">
          <polygon :points="outline" fill="none" stroke="#f00000" stroke-width="5" stroke-linejoin="round" />
        </svg>
      </div>
    </main>

    <footer class="status">
      <div class="locator">
        <svg width="20" height="20" viewBox="0 0 20 20" fill="none" stroke="#777" stroke-width="2"><circle cx="8.500" cy="8.500" r="6.500" /><path d="M13 13l6 6" /></svg>
        <span>Type to locate (Ctrl+K)</span>
      </div>
      <div class="status-items">
        <span class="lbl">Coordinate</span>
        <span class="field coord">12820342,4945286</span>
        <svg class="mouse" width="22" height="26" viewBox="0 0 22 26">
          <path d="M3 4l6 14 5 6 5-3-5-13z" fill="#555" />
          <circle cx="12" cy="18" r="4" fill="#fff" stroke="#222" stroke-width="2" />
          <path d="M2 2l3 4M8 2l1 5M16 3l-2 4" stroke="#222" stroke-width="2" />
        </svg>
        <span class="lbl scale">Scale</span>
        <span class="field combo">1:1236774<i class="combo-arrow"></i></span>
        <svg class="lock" width="18" height="30" viewBox="0 0 18 30">
          <path d="M4 14V8a5 5 0 0110 0v6" fill="none" stroke="#9a9a9a" stroke-width="2" />
          <rect x="2" y="13" width="14" height="15" rx="1" fill="#6e6e6e" />
        </svg>
        <span class="lbl magn">Magnifier</span>
        <span class="field spin magn-f">100%<i class="spin-arrows"></i></span>
        <span class="lbl rot">Rotation</span>
        <span class="field spin rot-f">0.0 °<i class="spin-arrows"></i></span>
        <span class="render-check">
          <svg width="18" height="18" viewBox="0 0 18 18"><path d="M4 9l4 6 6-12" fill="none" stroke="#000" stroke-width="2.400" /></svg>
        </span>
        <span class="lbl render">Render</span>
        <svg class="crs" width="24" height="22" viewBox="0 0 24 24" v-html="icons.globeGray"></svg>
        <span class="lbl epsg">EPSG:3857</span>
        <svg class="bubble" width="26" height="22" viewBox="0 0 26 22">
          <ellipse cx="13" cy="9" rx="12" ry="9" fill="#808080" />
          <path d="M16 15l7 7-11-4z" fill="#808080" />
        </svg>
        <span class="watermark">CSDN @Xxlong_09</span>
      </div>
    </footer>

    <div class="mini">
      <svg class="mini-ico" width="24" height="24" viewBox="0 0 24 24" v-html="icons.tri"></svg>
      <svg class="mini-copy" width="16" height="16" viewBox="0 0 16 16" fill="none" stroke="#777" stroke-width="1.300">
        <rect x="1" y="4" width="11" height="11" rx="2" fill="#f0f0f0" />
        <path d="M4 1h8q3 0 3 3v8" />
      </svg>
      <svg class="mini-max" width="15" height="15" viewBox="0 0 15 15"><rect x="1" y="1" width="13" height="13" rx="2" fill="none" stroke="#777" stroke-width="1.400" /></svg>
      <svg class="mini-close" width="16" height="16" viewBox="0 0 16 16"><path d="M1 1l14 14M15 1L1 15" stroke="#777" stroke-width="1.400" /></svg>
    </div>
  </div>
</template>

<style>
html,
body {
  margin: 0;
  background: #f0f0f0;
}
</style>

<style scoped>
.app {
  position: relative;
  width: 2560px;
  height: 1367px;
  display: flex;
  flex-direction: column;
  overflow: hidden;
  font-family: "Noto Sans", "Noto Sans CJK SC", sans-serif;
  color: #111;
  background: #f0f0f0;
}

.titlebar {
  height: 33px;
  flex: none;
  display: flex;
  align-items: center;
  background: linear-gradient(90deg, #f3f3f3 0, #f3f3f3 40%, #eef2fb 60%, #f2f3f6 80%, #f0f0f0 100%);
}

.qgis {
  margin-left: 2px;
}

.win-title {
  margin-left: 6px;
  font-size: 16.700px;
  color: #222;
}

.upload {
  margin-left: auto;
  align-self: flex-start;
  width: 190px;
  height: 46px;
  box-sizing: border-box;
  display: flex;
  position: relative;
  z-index: 2;
  border: 1px solid #1a9fff;
  border-top: 0;
  border-radius: 12px 12px 14px 14px;
  background: #ecf8ff;
  overflow: hidden;
}

.upload-logo {
  width: 54px;
  display: flex;
  align-items: center;
  justify-content: center;
  background: linear-gradient(135deg, #0ea5ff, #0582ff);
}

.upload-text {
  flex: 1;
  text-align: center;
  line-height: 44px;
  font-size: 18px;
  color: #1fa4ff;
  padding-right: 3px;
}

.win-btns {
  display: flex;
  align-self: flex-start;
  gap: 54px;
  margin: 8px 29px 0 42px;
}

.menubar {
  height: 29px;
  flex: none;
  box-sizing: border-box;
  display: flex;
  align-items: center;
  gap: 18.200px;
  padding-left: 13px;
  background: #f0f0f0;
  border-bottom: 1px solid #d8d8d8;
  font-size: 18px;
}

.toolbar {
  height: 43px;
  flex: none;
  box-sizing: border-box;
  display: flex;
  align-items: center;
  padding-top: 2px;
  background: linear-gradient(#fbfbfb, #f1f1f1);
  border-bottom: 2px solid #c6c6c6;
}

.tool {
  flex: none;
  height: 30px;
  box-sizing: border-box;
  display: flex;
  align-items: center;
  justify-content: center;
}

.tool svg {
  flex: none;
  overflow: visible;
}

.tool.off svg {
  filter: grayscale(1);
  opacity: 0.35;
}

.tool.on {
  background: #dcdcdc;
  border: 1px solid #b9b9b9;
  border-radius: 3px;
}

.main {
  flex: 1;
  min-height: 0;
  display: flex;
}

.dock {
  width: 402px;
  flex: none;
  display: flex;
  flex-direction: column;
}

.dock-title {
  height: 23px;
  display: flex;
  align-items: center;
  justify-content: space-between;
  padding: 0 5px;
  font-size: 17px;
}

.dock-btns {
  display: flex;
  gap: 4px;
  margin-right: 15px;
}

.dock-tools {
  height: 34px;
  display: flex;
  align-items: center;
}

.dock-tool {
  width: 24px;
  height: 24px;
  flex: none;
  transform: scale(0.8);
}

.tree {
  height: 1047px;
  margin-left: 1px;
  width: 391px;
  box-sizing: border-box;
  background: #fff;
  border: 1px solid #c4c4c4;
  border-left-color: #ddd;
}

.layer {
  height: 27px;
  display: flex;
  align-items: center;
  font-size: 17.500px;
  font-weight: 700;
}

.layer.sel {
  background: #137fdc;
  color: #fff;
  text-decoration: underline;
}

.layer.dim {
  color: #7d7d7d;
  font-style: italic;
  font-size: 19px;
}

.caret {
  width: 32px;
  flex: none;
  height: 12px;
  position: relative;
}

.caret.r::after {
  content: "";
  position: absolute;
  left: 12px;
  top: 0;
  border-left: 7px solid #5a5a5a;
  border-top: 6px solid transparent;
  border-bottom: 6px solid transparent;
}

.caret.d::after {
  content: "";
  position: absolute;
  left: 9px;
  top: 3px;
  border-top: 6px solid #5a5a5a;
  border-left: 6px solid transparent;
  border-right: 6px solid transparent;
}

.check,
.render-check {
  width: 21px;
  height: 21px;
  flex: none;
  box-sizing: border-box;
  display: flex;
  align-items: center;
  justify-content: center;
  background: #fff;
  border: 1px solid #a8a8a8;
}

.sym {
  width: 21px;
  height: 21px;
  box-sizing: border-box;
  margin-left: 6px;
  flex: none;
}

.sym-line {
  border: 3px solid #e60000;
  background: #137fdc;
}

.sym-faint {
  border: 1px solid #f7c0c0;
  background: #fff;
}

.sym-raster {
  margin-left: 9px;
  flex: none;
}

.layer-name {
  margin-left: 8px;
}

.sel .layer-name {
  margin-left: 7px;
}

.band {
  margin: 1px 0 0 62px;
  height: 24px;
  line-height: 24px;
  font-size: 18.500px;
}

.legend {
  display: flex;
  margin-left: 63px;
}

.ramp {
  width: 19px;
  height: 114px;
  background: linear-gradient(#fff, #000);
}

.ramp-labels {
  height: 114px;
  margin-top: -2px;
  display: flex;
  flex-direction: column;
  justify-content: space-between;
  margin-left: 8px;
  font-size: 15.500px;
  line-height: 20px;
}

.tabs {
  display: flex;
  align-items: flex-start;
  height: 36px;
  box-sizing: border-box;
  padding-top: 2px;
  padding-left: 1px;
  font-family: "Liberation Mono", monospace;
  font-size: 15px;
  border-right: 1px solid #b8b8b8;
}

.tab {
  width: 99px;
  height: 31px;
  box-sizing: border-box;
  text-align: center;
  line-height: 29px;
  background: #dcdcdc;
  border: 1px solid #c4c4c4;
  border-top: 0;
  border-radius: 0 0 3px 3px;
  margin-left: -1px;
}

.tab.active {
  width: 90px;
  height: 33px;
  line-height: 35px;
  background: #f4f4f4;
  margin-left: 0;
}

.canvas {
  flex: 1;
  background: #fff;
  overflow: hidden;
  border-top: 1px solid #b8b8b8;
  border-left: 1px solid #b8b8b8;
  border-bottom: 1px solid #b8b8b8;
  margin-top: 1px;
}

.map {
  display: block;
  margin: -2px 0 0 -1px;
}

.status {
  height: 36px;
  flex: none;
  position: relative;
  display: flex;
  align-items: center;
  background: #f0f0f0;
  font-family: "Liberation Mono", monospace;
  font-size: 13.300px;
}

.locator {
  width: 300px;
  height: 29px;
  margin-left: 4px;
  flex: none;
  box-sizing: border-box;
  display: flex;
  align-items: center;
  gap: 7px;
  padding-left: 12px;
  background: #fff;
  border: 1px solid #c8c8c8;
  border-radius: 3px;
  font-size: 14.700px;
  color: #8a8a8a;
}

.status-items {
  display: flex;
  align-items: center;
  margin-left: 1144px;
  position: relative;
}

.field {
  height: 29px;
  line-height: 27px;
  box-sizing: border-box;
  padding-left: 5px;
  background: #fff;
  border: 1px solid #c4c4c4;
  border-radius: 3px;
  color: #222;
  position: relative;
}

.coord {
  width: 144px;
  margin-left: 4px;
}

.mouse {
  margin-left: 4px;
}

.scale {
  margin-left: 16px;
}

.combo {
  width: 116px;
  margin-left: 4px;
}

.combo-arrow {
  position: absolute;
  right: 0;
  top: 0;
  width: 29px;
  height: 27px;
  background: #f2f2f2;
}

.combo-arrow::after {
  content: "";
  position: absolute;
  left: 9px;
  top: 11px;
  border-top: 7px solid #666;
  border-left: 5px solid transparent;
  border-right: 5px solid transparent;
}

.lock {
  margin-left: 13px;
}

.magn {
  margin-left: 7px;
}

.magn-f {
  width: 116px;
  margin-left: 4px;
}

.rot {
  margin-left: 9px;
}

.rot-f {
  width: 108px;
  margin-left: 9px;
}

.spin-arrows {
  position: absolute;
  right: 0;
  top: 0;
  width: 20px;
  height: 27px;
  border-left: 1px solid #ddd;
  background: #f6f6f6;
}

.spin-arrows::before,
.spin-arrows::after {
  content: "";
  position: absolute;
  left: 4px;
  border-left: 6px solid transparent;
  border-right: 6px solid transparent;
}

.spin-arrows::before {
  top: 4px;
  border-bottom: 7px solid #666;
}

.spin-arrows::after {
  bottom: 4px;
  border-top: 7px solid #666;
}

.render-check {
  margin-left: 7px;
}

.render {
  margin-left: 8px;
}

.crs {
  margin-left: 16px;
}

.epsg {
  margin-left: 1px;
}

.watermark {
  position: absolute;
  left: 975px;
  white-space: nowrap;
  color: rgba(100, 100, 100, 0.8);
  font-family: "Liberation Sans", sans-serif;
  font-size: 14px;
  letter-spacing: 0.6px;
}

.bubble {
  position: absolute;
  left: 1077px;
  top: 5px;
}

.mini {
  position: absolute;
  left: 247px;
  bottom: -2px;
  z-index: 3;
  width: 217px;
  height: 38px;
  box-sizing: border-box;
  display: flex;
  align-items: center;
  background: #f0f0f0;
  border: 2px solid #bcbcbc;
  border-radius: 13px;
  box-shadow: 0 0 14px rgba(0, 0, 0, 0.25);
}

.mini-ico {
  margin-left: 11px;
}

.mini-copy {
  margin-left: -4px;
}

.mini-max {
  margin-left: 53px;
}

.mini-close {
  margin-left: 55px;
}
</style>
